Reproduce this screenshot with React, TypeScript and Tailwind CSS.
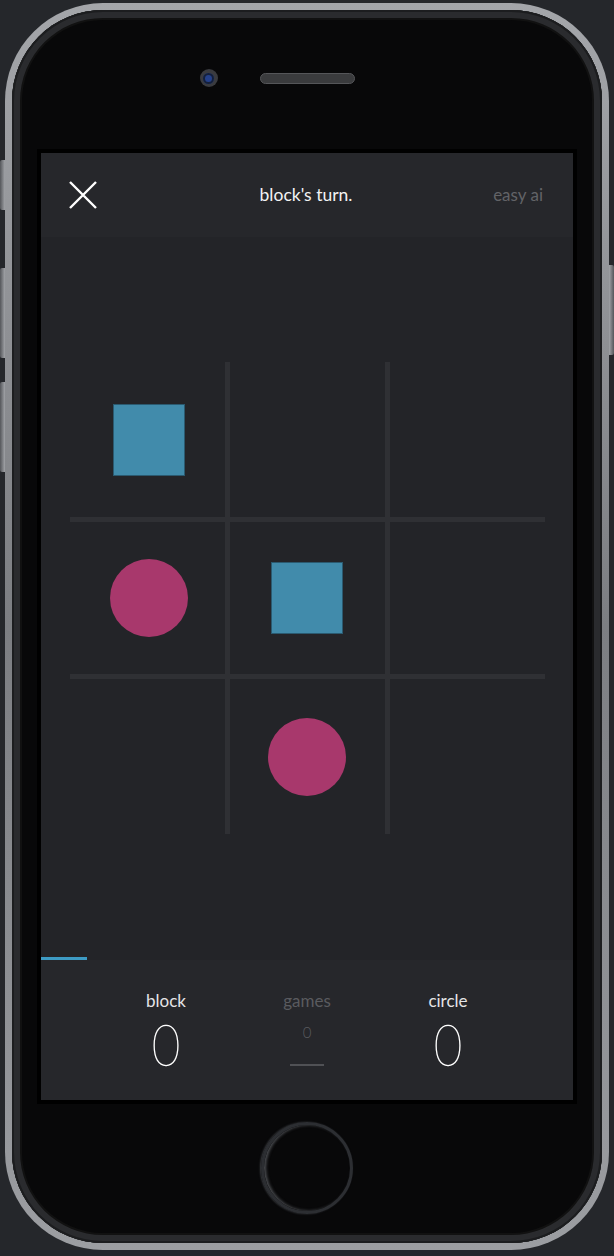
type Piece = "block" | "circle" | null;

const board: Piece[] = [
  "block", null, null,
  "circle", "block", null,
  null, "circle", null,
];

function Cell({ piece, col }: { piece: Piece; col: number }) {
  return (
    <div className={`flex items-center justify-center bg-[#232428] ${col === 0 ? "pl-[3px]" : ""}`}>
      {piece === "block" && (
        <div className="h-[72px] w-[72px] border border-[#2b5a70] bg-[#418bab]" />
      )}
      {piece === "circle" && (
        <div className="h-[78px] w-[78px] rounded-full bg-[#a8386c]" />
      )}
    </div>
  );
}

function Score({ label, value }: { label: string; value: number }) {
  return (
    <div className="flex w-[141px] flex-col items-center">
      <span className="text-[17px] leading-[22px] text-[#e4e4e6]">{label}</span>
      <span className="mt-[12px] font-['Inter',sans-serif] text-[56px] font-thin leading-[44px] text-white">
        {value}
      </span>
    </div>
  );
}

export default function App() {
  return (
    <div className="relative h-[1256px] w-[614px] overflow-hidden bg-[#25272b] pt-[3px] font-['Lato',sans-serif]">
      {/* side buttons */}
      <div className="absolute left-0 top-[160px] h-[50px] w-[5px] rounded-l-[2px] bg-gradient-to-r from-[#55575b] to-[#a2a4a8]" />
      <div className="absolute left-0 top-[268px] h-[90px] w-[5px] rounded-l-[2px] bg-gradient-to-r from-[#55575b] to-[#a2a4a8]" />
      <div className="absolute left-0 top-[382px] h-[90px] w-[5px] rounded-l-[2px] bg-gradient-to-r from-[#55575b] to-[#a2a4a8]" />
      <div className="absolute right-0 top-[265px] h-[90px] w-[5px] rounded-r-[2px] bg-gradient-to-l from-[#55575b] to-[#a2a4a8]" />

      <div className="ml-[5px] h-[1247px] w-[604px] rounded-[98px] bg-gradient-to-b from-[#a4a6aa] via-[#7c7e82] to-[#9c9ea2] p-[7px]">
        <div className="flex h-full w-full flex-col items-center rounded-[91px] bg-[#080809] pt-[59px] shadow-[inset_0_0_0_2px_#1c1d1f,inset_0_0_0_8px_#2a2b2e,inset_0_0_0_10px_#111]">
          {/* camera + speaker */}
          <div className="flex h-[18px] items-center gap-[42px]">
            <div className="flex h-[18px] w-[18px] items-center justify-center rounded-full bg-[#3a3b3f]">
              <div className="h-[11px] w-[11px] rounded-full bg-[#24408a] shadow-[inset_0_0_0_2px_#15203a]" />
            </div>
            <div className="h-[11px] w-[95px] rounded-full border border-[#555659] bg-[#3a3b3d]" />
            <div className="w-[18px]" />
          </div>

          {/* screen */}
          <div className="mt-[66px] flex h-[947px] w-[532px] flex-col bg-[#232428] shadow-[0_0_0_4px_#000]">
            <div className="grid h-[84px] grid-cols-3 items-center bg-[#26272b] pl-[28px] pr-[30px]">
              <svg width="28" height="28" viewBox="0 0 28 28" className="text-white">
                <path d="M1 1L27 27M27 1L1 27" stroke="currentColor" strokeWidth="2.4" />
              </svg>
              <span className="text-center text-[17.5px] text-[#f2f2f4]">block's turn.</span>
              <span className="text-right text-[17px] text-[#626367]">easy ai</span>
            </div>

            <div className="flex flex-1 items-center justify-center pt-[2px]">
              <div className="grid grid-cols-[155px_155px_155px] grid-rows-[155px_152px_155px] gap-[5px] bg-[#2f3034]">
                {board.map((p, i) => (
                  <Cell key={i} piece={p} col={i % 3} />
                ))}
              </div>
            </div>

            <div className="h-[3px] w-[46px] bg-[#3d9bc4]" />

            <div className="flex h-[140px] justify-center bg-[#26272b] pt-[30px]">
              <Score label="block" value={0} />
              <div className="flex w-[141px] flex-col items-center">
                <span className="text-[17px] leading-[22px] text-[#5a5b5f]">games</span>
                <span className="mt-[11px] text-[15px] font-light leading-[18px] text-[#5a5b5f]">0</span>
                <div className="mt-[23px] h-[2px] w-[34px] bg-[#505155]" />
              </div>
              <Score label="circle" value={0} />
            </div>
          </div>

          {/* home button */}
          <div className="mt-[22px] h-[92px] w-[92px] rounded-full border-[3px] border-[#2c2e32] shadow-[inset_2px_0_3px_#4a4c50,-1px_0_2px_#3a3c40]" />
        </div>
      </div>
    </div>
  );
}
